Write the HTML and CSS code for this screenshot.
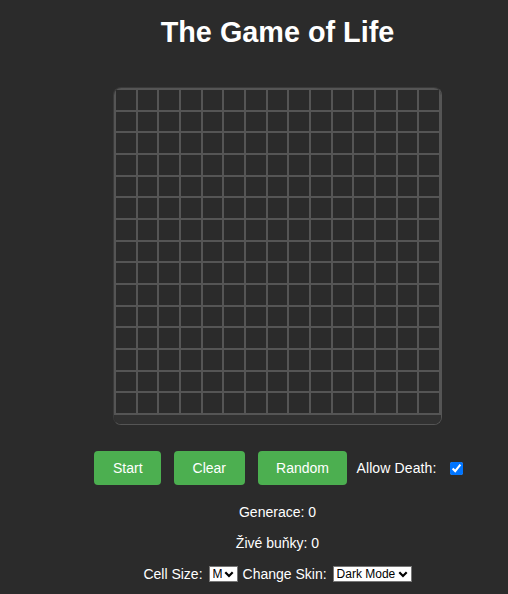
FILE: index.html
```html
<!DOCTYPE html>
<html lang="cs">
<head>
<meta charset="utf-8">
<title>The Game of Life</title>
<link rel="stylesheet" href="styles.css">
</head>
<body>
<div class="page">
  <h1 class="title">The Game of Life</h1>
  <div class="board">
    <div class="grid">
      <span class="cell"></span><span class="cell"></span><span class="cell"></span><span class="cell"></span><span class="cell"></span><span class="cell"></span><span class="cell"></span><span class="cell"></span><span class="cell"></span><span class="cell"></span><span class="cell"></span><span class="cell"></span><span class="cell"></span><span class="cell"></span><span class="cell"></span>
      <span class="cell"></span><span class="cell"></span><span class="cell"></span><span class="cell"></span><span class="cell"></span><span class="cell"></span><span class="cell"></span><span class="cell"></span><span class="cell"></span><span class="cell"></span><span class="cell"></span><span class="cell"></span><span class="cell"></span><span class="cell"></span><span class="cell"></span>
      <span class="cell"></span><span class="cell"></span><span class="cell"></span><span class="cell"></span><span class="cell"></span><span class="cell"></span><span class="cell"></span><span class="cell"></span><span class="cell"></span><span class="cell"></span><span class="cell"></span><span class="cell"></span><span class="cell"></span><span class="cell"></span><span class="cell"></span>
      <span class="cell"></span><span class="cell"></span><span class="cell"></span><span class="cell"></span><span class="cell"></span><span class="cell"></span><span class="cell"></span><span class="cell"></span><span class="cell"></span><span class="cell"></span><span class="cell"></span><span class="cell"></span><span class="cell"></span><span class="cell"></span><span class="cell"></span>
      <span class="cell"></span><span class="cell"></span><span class="cell"></span><span class="cell"></span><span class="cell"></span><span class="cell"></span><span class="cell"></span><span class="cell"></span><span class="cell"></span><span class="cell"></span><span class="cell"></span><span class="cell"></span><span class="cell"></span><span class="cell"></span><span class="cell"></span>
      <span class="cell"></span><span class="cell"></span><span class="cell"></span><span class="cell"></span><span class="cell"></span><span class="cell"></span><span class="cell"></span><span class="cell"></span><span class="cell"></span><span class="cell"></span><span class="cell"></span><span class="cell"></span><span class="cell"></span><span class="cell"></span><span class="cell"></span>
      <span class="cell"></span><span class="cell"></span><span class="cell"></span><span class="cell"></span><span class="cell"></span><span class="cell"></span><span class="cell"></span><span class="cell"></span><span class="cell"></span><span class="cell"></span><span class="cell"></span><span class="cell"></span><span class="cell"></span><span class="cell"></span><span class="cell"></span>
      <span class="cell"></span><span class="cell"></span><span class="cell"></span><span class="cell"></span><span class="cell"></span><span class="cell"></span><span class="cell"></span><span class="cell"></span><span class="cell"></span><span class="cell"></span><span class="cell"></span><span class="cell"></span><span class="cell"></span><span class="cell"></span><span class="cell"></span>
      <span class="cell"></span><span class="cell"></span><span class="cell"></span><span class="cell"></span><span class="cell"></span><span class="cell"></span><span class="cell"></span><span class="cell"></span><span class="cell"></span><span class="cell"></span><span class="cell"></span><span class="cell"></span><span class="cell"></span><span class="cell"></span><span class="cell"></span>
      <span class="cell"></span><span class="cell"></span><span class="cell"></span><span class="cell"></span><span class="cell"></span><span class="cell"></span><span class="cell"></span><span class="cell"></span><span class="cell"></span><span class="cell"></span><span class="cell"></span><span class="cell"></span><span class="cell"></span><span class="cell"></span><span class="cell"></span>
      <span class="cell"></span><span class="cell"></span><span class="cell"></span><span class="cell"></span><span class="cell"></span><span class="cell"></span><span class="cell"></span><span class="cell"></span><span class="cell"></span><span class="cell"></span><span class="cell"></span><span class="cell"></span><span class="cell"></span><span class="cell"></span><span class="cell"></span>
      <span class="cell"></span><span class="cell"></span><span class="cell"></span><span class="cell"></span><span class="cell"></span><span class="cell"></span><span class="cell"></span><span class="cell"></span><span class="cell"></span><span class="cell"></span><span class="cell"></span><span class="cell"></span><span class="cell"></span><span class="cell"></span><span class="cell"></span>
      <span class="cell"></span><span class="cell"></span><span class="cell"></span><span class="cell"></span><span class="cell"></span><span class="cell"></span><span class="cell"></span><span class="cell"></span><span class="cell"></span><span class="cell"></span><span class="cell"></span><span class="cell"></span><span class="cell"></span><span class="cell"></span><span class="cell"></span>
      <span class="cell"></span><span class="cell"></span><span class="cell"></span><span class="cell"></span><span class="cell"></span><span class="cell"></span><span class="cell"></span><span class="cell"></span><span class="cell"></span><span class="cell"></span><span class="cell"></span><span class="cell"></span><span class="cell"></span><span class="cell"></span><span class="cell"></span>
      <span class="cell"></span><span class="cell"></span><span class="cell"></span><span class="cell"></span><span class="cell"></span><span class="cell"></span><span class="cell"></span><span class="cell"></span><span class="cell"></span><span class="cell"></span><span class="cell"></span><span class="cell"></span><span class="cell"></span><span class="cell"></span><span class="cell"></span>
    </div>
    <div class="track"></div>
  </div>

  <div class="controls">
    <button class="btn" type="button">Start</button>
    <button class="btn" type="button">Clear</button>
    <button class="btn" type="button">Random</button>
    <label class="death-label" for="death">Allow Death:</label>
    <input class="death-check" id="death" type="checkbox" checked>
  </div>

  <p class="stat stat-gen">Generace: 0</p>
  <p class="stat stat-live">Živé buňky: 0</p>

  <div class="settings">
    <span class="set-label">Cell Size:</span>
    <span class="select-wrap size-wrap">
      <select class="select size-select">
        <option>S</option>
        <option selected>M</option>
        <option>L</option>
      </select>
      <svg class="chev" width="10" height="7" viewBox="0 0 10 7"><path d="M1.3 1.3 L5 5 L8.7 1.3" fill="none" stroke="#000" stroke-width="2.2"/></svg>
    </span>
    <span class="set-label skin-label">Change Skin:</span>
    <span class="select-wrap skin-wrap">
      <select class="select skin-select">
        <option selected>Dark Mode</option>
        <option>Light Mode</option>
      </select>
      <svg class="chev" width="10" height="7" viewBox="0 0 10 7"><path d="M1.3 1.3 L5 5 L8.7 1.3" fill="none" stroke="#000" stroke-width="2.2"/></svg>
    </span>
  </div>
</div>
</body>
</html>
```

FILE: styles.css
```css
html, body {
  margin: 0;
  background: #2b2b2b;
}

body {
  font-family: "Liberation Sans", Arial, sans-serif;
  color: #ffffff;
}

.page {
  padding-left: 47px;
  display: flex;
  flex-direction: column;
  align-items: center;
}

.title {
  margin: 16px 0 0;
  font-size: 28.8px;
  line-height: 33px;
  font-weight: bold;
}

.board {
  margin-top: 38px;
  width: 327px;
  border: 1px solid;
  border-color: #3a3a3a #555555 #555555 #3a3a3a;
  border-radius: 8px;
  overflow: hidden;
}

.grid {
  box-sizing: border-box;
  height: 327px;
  display: grid;
  grid-template-columns: repeat(15, 1fr);
  grid-template-rows: repeat(15, 1fr);
  gap: 2px;
  padding: 2px;
  background: #555555;
}

.cell {
  background: #2b2b2b;
}

.track {
  height: 9px;
  background: #313131;
}

.controls {
  margin-top: 26px;
  display: flex;
  align-items: center;
  margin-left: 2px;
}

.btn {
  height: 34px;
  padding: 0 18.5px;
  margin: 0 13px 0 0;
  border: none;
  border-radius: 4px;
  background: #4caf50;
  color: #ffffff;
  font-family: "Liberation Sans", Arial, sans-serif;
  font-size: 14px;
}

.btn:nth-of-type(3) {
  margin-right: 9px;
}

.death-label {
  font-size: 14px;
  line-height: 16px;
  letter-spacing: 0.12px;
}

.death-check {
  width: 13px;
  height: 13px;
  margin: 0 0 0 13px;
}

.stat {
  margin: 0;
  font-size: 14px;
  line-height: 16px;
}

.stat-gen {
  margin-top: 19px;
}

.stat-live {
  margin-top: 15px;
}

.settings {
  margin-top: 14px;
  display: flex;
  align-items: center;
  height: 17px;
  font-size: 14px;
}

.set-label {
  margin-right: 6px;
}

.skin-label {
  margin-left: 5px;
}

.select-wrap {
  position: relative;
  display: block;
  height: 16px;
}

.select {
  appearance: none;
  -webkit-appearance: none;
  display: block;
  box-sizing: border-box;
  height: 16px;
  margin: 0;
  padding: 0 0 0 3px;
  border: 1px solid #767676;
  border-radius: 0;
  background: #ffffff;
  color: #000000;
  font-family: "Liberation Sans", Arial, sans-serif;
  font-size: 12px;
  line-height: 14px;
}

.size-select {
  width: 29px;
}

.skin-select {
  width: 79px;
}

.chev {
  position: absolute;
  right: 4px;
  top: 5px;
  pointer-events: none;
}
```
